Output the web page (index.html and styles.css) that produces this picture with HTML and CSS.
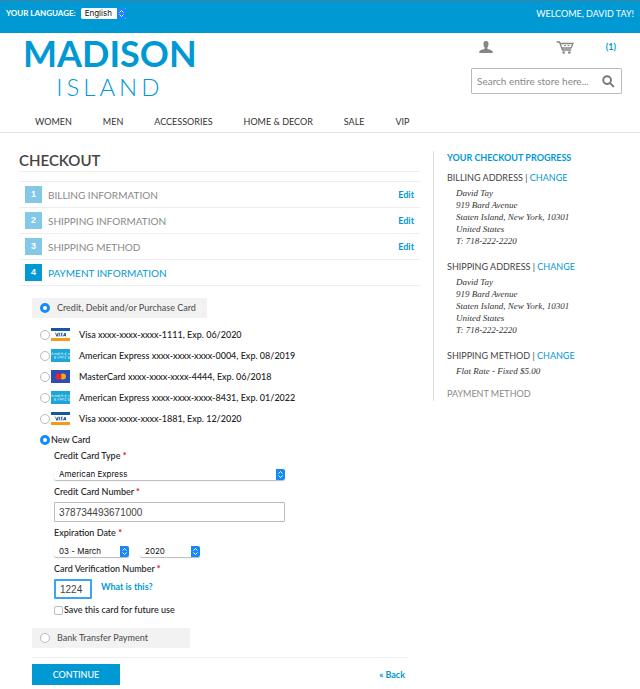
FILE: index.html
```html
<!DOCTYPE html>
<html lang="en">
<head>
<meta charset="utf-8">
<meta name="viewport" content="width=device-width, initial-scale=1">
<title>Checkout - Madison Island</title>
<link rel="stylesheet" href="styles.css">
</head>
<body>
<svg class="defs" width="0" height="0" aria-hidden="true">
  <symbol id="visa" viewBox="0 0 19 13">
    <rect width="19" height="13" fill="#fff"/>
    <rect width="19" height="3" fill="#1557a5"/>
    <rect y="10" width="19" height="3" fill="#f59a13"/>
    <path d="M4.400 4.800 6 8.400 7.200 4.800M8.500 4.800 8 8.400M11.600 5.200H10.300Q9.500 6.400 11 6.600Q11.400 8.200 9.500 8M12.300 8.400 14 5 14.700 8.400M13 7.400H14.500" fill="none" stroke="#1a4f96"/>
    <path d="M4.200 4.600 5.300 6.500" stroke="#f59a13"/>
  </symbol>
  <symbol id="amex" viewBox="0 0 19 13">
    <rect width="19" height="13" fill="#1ba5d8"/>
    <path d="M0 6 1.500 3.500 3 6M1 5.200H2M4 6V4L5 5.500 6 4V6M9 4H7V6H9M7 5H9M10 6V4H12L11 5 12 6M13 4V6M16 4H14.500V6H16M17 6 18 4 19 6" fill="none" stroke="#a5def3" stroke-width=".7"/>
    <path d="M5 7.500H3.500V9.500H5M3.500 8.500H5M6 7.500 8 9.500M8 7.500 6 9.500M9 9.500V7.500H10.500V8.500H9M11.500 9.500V7.500H13L12 8.500 13 9.500M15.500 7.500H14V9.500H15.500M18.500 7.500H17V8.500H18.500V9.500H17" fill="none" stroke="#a5def3" stroke-width=".7"/>
  </symbol>
  <symbol id="mastercard" viewBox="0 0 19 13">
    <rect width="19" height="13" fill="#2d4db3"/>
    <circle cx="12" cy="6.500" r="3" fill="#f7a51c"/>
    <circle cx="7.500" cy="6.500" r="3" fill="#e9242c"/>
  </symbol>
</svg>

<header>
  <div class="topbar">
    <div class="language">
      <label for="language">YOUR LANGUAGE:</label>
      <span class="select"><select id="language"><option>English</option></select><svg viewBox="0 0 9 11"><path d="M2.500 4.500 4.500 2.500 6.500 4.500M2.500 6.500 4.500 8.500 6.500 6.500"/></svg></span>
    </div>
    <p class="welcome">WELCOME, DAVID TAY!</p>
  </div>
  <div class="masthead">
    <a class="logo" href="#"><span class="logo-main">MADISON</span><span class="logo-sub">ISLAND</span></a>
    <div class="tools">
      <div class="shortcuts">
        <a href="#" aria-label="Account"><svg class="account" viewBox="0 0 14 12"><path d="M7 0C4.800 0 4.300 1.300 4.500 3.200 4.600 4.900 5.300 5.700 5.600 6.400V7.700C4.800 8.600 1 8.500 .300 10.500V12H13.700V10.500C13 8.500 9.200 8.600 8.400 7.700V6.400C8.700 5.700 9.400 4.900 9.500 3.200 9.700 1.300 9.200 0 7 0Z" fill="#858585"/></svg></a>
        <a class="cart" href="#" aria-label="Cart, 1 item"><svg viewBox="0 0 18 13"><g fill="none" stroke="#858585"><path d="M.500 1H3.500L6.500 9H15M4.500 2.500H17L15 7H6" stroke-width="1.300"/><path d="M8 4.500H10M11.500 4.500H13.500"/></g><circle cx="7.700" cy="11.500" r="1.300" fill="#858585"/><circle cx="13.300" cy="11.500" r="1.300" fill="#858585"/></svg><span>(1)</span></a>
      </div>
      <form class="search">
        <input type="text" aria-label="Search" placeholder="Search entire store here...">
        <button type="button" aria-label="Search"><svg viewBox="0 0 14 14"><circle cx="5.500" cy="5.500" r="4.200"/><path d="M8.700 8.700 12.800 12.800"/></svg></button>
      </form>
    </div>
  </div>
  <nav>
    <a href="#">WOMEN</a><a href="#">MEN</a><a href="#">ACCESSORIES</a><a href="#">HOME &amp; DECOR</a><a href="#">SALE</a><a href="#">VIP</a>
  </nav>
</header>

<div class="layout">
  <main>
    <h1>CHECKOUT</h1>
    <ol class="steps">
      <li><b>1</b><span>BILLING INFORMATION</span><a href="#">Edit</a></li>
      <li><b>2</b><span>SHIPPING INFORMATION</span><a href="#">Edit</a></li>
      <li><b>3</b><span>SHIPPING METHOD</span><a href="#">Edit</a></li>
      <li class="active"><b>4</b><span>PAYMENT INFORMATION</span></li>
    </ol>
    <form class="payment">
      <label class="method"><input type="radio" name="method" checked>Credit, Debit and/or Purchase Card</label>
      <div class="cards">
        <label><input type="radio" name="card"><svg><use href="#visa"/></svg><span>Visa xxxx-xxxx-xxxx-1111, Exp. 06/2020</span></label>
        <label><input type="radio" name="card"><svg><use href="#amex"/></svg><span>American Express xxxx-xxxx-xxxx-0004, Exp. 08/2019</span></label>
        <label><input type="radio" name="card"><svg><use href="#mastercard"/></svg><span>MasterCard xxxx-xxxx-xxxx-4444, Exp. 06/2018</span></label>
        <label><input type="radio" name="card"><svg><use href="#amex"/></svg><span>American Express xxxx-xxxx-xxxx-8431, Exp. 01/2022</span></label>
        <label><input type="radio" name="card"><svg><use href="#visa"/></svg><span>Visa xxxx-xxxx-xxxx-1881, Exp. 12/2020</span></label>
        <label><input type="radio" name="card" checked>New Card</label>
      </div>
      <div class="fields">
        <label for="type">Credit Card Type <em>*</em></label>
        <span class="select"><select id="type"><option>American Express</option></select><svg viewBox="0 0 9 11"><path d="M2.500 4.500 4.500 2.500 6.500 4.500M2.500 6.500 4.500 8.500 6.500 6.500"/></svg></span>
        <label class="tight" for="number">Credit Card Number <em>*</em></label>
        <input class="text" id="number" type="text" value="378734493671000">
        <label for="month">Expiration Date <em>*</em></label>
        <div class="expiry">
          <span class="select"><select id="month"><option>03 - March</option></select><svg viewBox="0 0 9 11"><path d="M2.500 4.500 4.500 2.500 6.500 4.500M2.500 6.500 4.500 8.500 6.500 6.500"/></svg></span>
          <span class="select"><select aria-label="Expiration year"><option>2020</option></select><svg viewBox="0 0 9 11"><path d="M2.500 4.500 4.500 2.500 6.500 4.500M2.500 6.500 4.500 8.500 6.500 6.500"/></svg></span>
        </div>
        <label class="tight" for="cvv">Card Verification Number <em>*</em></label>
        <div class="cvv"><input class="text" id="cvv" type="text" value="1224"><a href="#">What is this?</a></div>
        <label class="save"><input type="checkbox">Save this card for future use</label>
      </div>
      <label class="method bank"><input type="radio" name="method">Bank Transfer Payment</label>
      <div class="actions">
        <button type="button">CONTINUE</button>
        <a href="#">« Back</a>
      </div>
    </form>
  </main>
  <aside>
    <h2>YOUR CHECKOUT PROGRESS</h2>
    <h3>BILLING ADDRESS | <a href="#">CHANGE</a></h3>
    <address>David Tay<br>919 Bard Avenue<br>Staten Island, New York, 10301<br>United States<br>T: 718-222-2220</address>
    <h3>SHIPPING ADDRESS | <a href="#">CHANGE</a></h3>
    <address>David Tay<br>919 Bard Avenue<br>Staten Island, New York, 10301<br>United States<br>T: 718-222-2220</address>
    <h3>SHIPPING METHOD | <a href="#">CHANGE</a></h3>
    <p class="rate">Flat Rate - Fixed $5.00</p>
    <h3 class="pending">PAYMENT METHOD</h3>
  </aside>
</div>
</body>
</html>
```
FILE: styles.css
```css
* { box-sizing: border-box; }
body { margin: 0; background: #fff; color: #444; font: 9px/12px Lato, "Open Sans", sans-serif; }
a { color: #0099d3; text-decoration: none; }
h1, h2, h3, p, ol { margin: 0; padding: 0; font-weight: 400; }
input, select, button { margin: 0; font-family: inherit; color: inherit; }
.defs { position: absolute; }

.topbar { display: flex; justify-content: space-between; align-items: flex-start; height: 33px; padding: 6px 6px 0; border-top: 1px solid #43839f; background: #0099d3; color: #fff; line-height: 13px; }
.language { display: flex; align-items: center; gap: 5px; font-size: 8px; font-weight: 700; }
.welcome { font-size: 9px; }

.select { display: flex; position: relative; width: 231px; height: 11px; }
.select select { appearance: none; width: 100%; height: 11px; padding: 0 12px 0 5px; border: 0; border-radius: 2px; background: #fff; box-shadow: 0 1px 1px #bbb; color: #111; font: 8px/11px Inter, sans-serif; }
.select svg { position: absolute; right: 0; top: 0; width: 9px; height: 11px; border-radius: 0 2px 2px 0; background: #1688f8; fill: none; stroke: #fff; pointer-events: none; }
.language .select { width: 45px; }
.language select { padding-left: 4px; box-shadow: none; }

.masthead { display: flex; justify-content: space-between; padding: 4px 18px 0 23px; height: 74px; }
.logo { display: flex; flex-direction: column; align-items: center; }
.logo-main { font-size: 36px; line-height: 32px; font-weight: 700; }
.logo-sub { font-size: 24px; line-height: 36px; font-weight: 300; letter-spacing: 4px; }
.tools { width: 151px; }
.shortcuts { display: flex; justify-content: space-between; align-items: center; height: 20px; padding: 0 6px 0 8px; }
.shortcuts svg { display: block; }
.account { width: 14px; height: 12px; }
.cart { display: flex; align-items: center; gap: 32px; font-size: 9px; font-weight: 700; }
.cart svg { width: 18px; height: 13px; }
.search { display: flex; align-items: center; height: 26px; margin-top: 11px; border: 1px solid #bbb; border-radius: 1px; }
.search input { flex: 1; min-width: 0; padding: 0 0 0 5px; border: 0; background: none; font-size: 10px; outline: 0; }
.search input::placeholder { color: #888; }
.search button { padding: 0 6px 0 0; border: 0; background: none; }
.search svg { display: block; width: 13px; height: 13px; fill: none; stroke: #757575; stroke-width: 2; }

nav { display: flex; gap: 31px; height: 26px; padding: 7px 0 0 35px; border-bottom: 1px solid #e5e5e5; font-size: 9px; line-height: 15px; }
nav a { color: #333; }

.layout { display: flex; gap: 13px; padding: 18px 19px 0; }
main { flex: 1; }
h1 { height: 21px; border-bottom: 1px solid #eee; font-size: 15px; line-height: 19px; font-weight: 600; color: #444; }
.steps { margin-top: 9px; list-style: none; border-top: 1px solid #eee; }
.steps li { display: flex; align-items: center; gap: 6px; height: 26px; padding: 0 6px; border-bottom: 1px solid #eee; font-size: 10px; color: #888; }
.steps b { width: 17px; height: 17px; background: #83c8e7; color: #fff; font: 700 9px/17px "Liberation Sans", sans-serif; text-align: center; }
.steps a { margin-left: auto; font-size: 9px; font-weight: 700; }
.steps .active { color: #0099d3; }
.steps .active b { background: #0099d3; }

input[type=radio], input[type=checkbox] { appearance: none; width: 10px; height: 10px; border: 1px solid #bbb; border-radius: 50%; background: #fff; flex: none; }
input[type=radio]:checked { border: 3px solid #138cfb; }
input[type=checkbox] { width: 9px; height: 9px; border-radius: 2px; }

.payment { padding: 12px 12px 0 13px; }
.method { display: flex; align-items: center; gap: 7px; width: 175px; height: 20px; padding-left: 8px; background: #f2f2f2; color: #555; font-weight: 500; white-space: nowrap; }
.cards { padding: 6px 0 0 8px; }
.cards label { display: flex; align-items: center; gap: 1px; height: 21px; color: #222; font-weight: 500; }
.cards svg { width: 19px; height: 13px; }
.cards span { padding-left: 8px; }
.fields { width: 253px; padding-left: 22px; color: #222; font-weight: 500; }
.fields > label { display: block; height: 19px; line-height: 12px; }
.fields > .tight { height: 16px; }
.fields em { color: #e00; font-style: normal; font-weight: 700; }
.fields > .select, .expiry { margin-bottom: 6px; }
.text { display: block; width: 100%; height: 20px; margin-bottom: 5px; padding: 0 4px; border: 1px solid #bbb; border-radius: 1px; font: 10px "Liberation Sans", sans-serif; color: #444; }
.expiry { display: flex; gap: 11px; }
.expiry .select { width: 75px; }
.expiry .select + .select { width: 60px; }
.cvv { display: flex; gap: 9px; }
.cvv .text { width: 38px; border: 2px solid #3ba3f5; }
.cvv a { padding-top: 2px; font-weight: 700; }
.fields .save { display: flex; align-items: center; gap: 1px; height: 12px; }
.bank { width: 158px; margin-top: 12px; }
.actions { display: flex; justify-content: space-between; align-items: center; margin-top: 9px; padding-top: 6px; border-top: 1px solid #eee; }
.actions button { width: 88px; height: 21px; border: 0; background: #0099d3; color: #fff; font-size: 9px; font-weight: 500; }
.actions a { padding-right: 3px; font-weight: 700; }

aside { width: 188px; height: 250px; padding-left: 13px; border-left: 1px solid #ddd; }
h2 { height: 20px; font-size: 9px; line-height: 14px; font-weight: 700; color: #0099d3; }
h3 { height: 16px; font-size: 9px; line-height: 14px; }
address, .rate { padding-left: 9px; font: italic 9px/12px "Liberation Serif", serif; color: #333; }
address { height: 73px; }
.rate { height: 22px; }
.pending { color: #888; }
```
